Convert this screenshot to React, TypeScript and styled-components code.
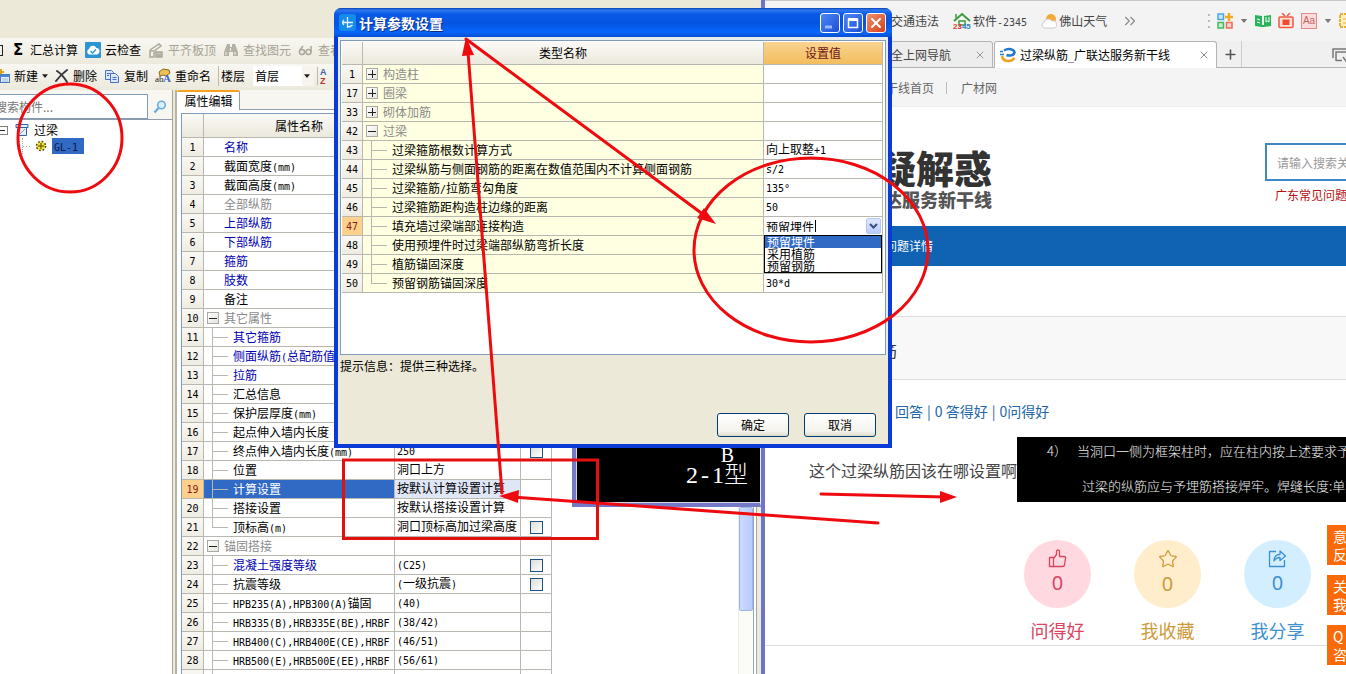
import React from 'react';
import styled, { createGlobalStyle, css } from 'styled-components';
import { Star, Plus, X, ChevronsRight } from 'lucide-react';

const cjk = '"Noto Sans CJK SC", sans-serif';
const line = '#b8b8b0';
const red = '#ee0a0e';

const GlobalStyle = createGlobalStyle`
  * { box-sizing: border-box; }
  html, body { margin: 0; height: 100%; overflow: hidden; }
  #root { height: 100%; }
  body { font: 12px/18px ${cjk}; color: #000; background: #fff; }
  button, input, select { font: inherit; color: inherit; margin: 0; padding: 0; border: 0; background: none; }
  a { color: inherit; text-decoration: none; }
  svg { display: block; flex: none; }
`;

const Ascii = styled.span`
  font-family: "DejaVu Sans Mono", monospace;
  font-size: 10px;
  line-height: 10px;
`;

/* Half-width characters take half of an ideograph's cell. */
const T = ({ children }: { children: string }) => (
  <>
    {children.split(/([\x21-\x7e°]+)/).map((part, i) => (i % 2 ? <Ascii key={i}>{part}</Ascii> : part))}
  </>
);

const Desktop = styled.div`
  position: relative;
  display: grid;
  grid-template-columns: 765px minmax(0, 1fr);
  height: 100%;
  overflow: hidden;
`;

/* ---------- modelling application ---------- */

const AppWindow = styled.section`
  display: flex;
  flex-direction: column;
  min-height: 0;
  overflow: hidden;
  background: #ece9d8;
  border-right: 4px solid #6f74c4;
`;
const MenuArea = styled.div`
  flex: 0 0 38px;
`;
const Toolbar = styled.div`
  display: flex;
  align-items: center;
  gap: 7px;
  flex: 0 0 26px;
  padding-bottom: 2px;
  background: linear-gradient(#f8f7f2, #ece9dc);
  overflow: hidden;
  white-space: nowrap;
`;
const ToolButton = styled.button`
  display: flex;
  align-items: center;
  gap: 4px;
  flex: none;
  line-height: 18px;
  &:disabled { color: #a5a295; }
`;
const CutGlyph = styled.span`
  width: 3px;
  height: 11px;
  border: 1px solid #222;
  border-left: 0;
`;
const Sigma = styled.span`
  width: 16px;
  text-align: center;
  font: bold 15px/18px "DejaVu Sans", sans-serif;
`;
const Field = styled.label`
  display: flex;
  align-items: center;
  gap: 8px;
  flex: none;
  padding-left: 2px;
  border-left: 1px solid #bdb9a8;
`;
const FloorSelect = styled.select`
  appearance: none;
  width: 61px;
  height: 20px;
  padding-left: 2px;
  background: #fff linear-gradient(#f6f4ec, #f6f4ec) right / 12px 100% no-repeat;
`;
const FloorBox = styled.span`
  display: flex;
  align-items: center;
  svg { margin-left: -10px; pointer-events: none; }
`;
const Workspace = styled.div`
  display: flex;
  flex: 1;
  min-height: 0;
`;
const TreePanel = styled.div`
  flex: 0 0 173px;
  background: #fff;
  border-right: 1px solid #a9a695;
  overflow: hidden;
`;
const SearchRow = styled.div`
  display: flex;
  align-items: flex-end;
  height: 30px;
  background: #f7f6f1;
  border-bottom: 1px solid #8e9cab;
`;
const SearchInput = styled.input`
  width: 148px;
  height: 25px;
  text-indent: -5px;
  background: #fff;
  border: 1px solid #7f9db9;
  border-left: 0;
  &::placeholder { color: #777; opacity: 1; }
`;
const SearchButton = styled.button`
  display: grid;
  place-items: center;
  width: 24px;
  height: 25px;
`;
const Tree = styled.ul`
  list-style: none;
  margin: 0;
  padding: 2px 0 0;
`;
const TreeItem = styled.li<{ $child?: boolean }>`
  display: flex;
  align-items: center;
  gap: ${p => (p.$child ? 5 : 6)}px;
  height: 16px;
  padding-left: ${p => (p.$child ? 22 : 0)}px;
  line-height: 16px;
`;
const BeamLabel = styled.span`
  display: flex;
  align-items: center;
  gap: 5px;
  padding-left: 1px;
`;
const Selected = styled.span`
  padding: 0 6px 0 2px;
  background: #316ac5;
  color: #0a1a44;
`;
const Collapse = styled.button`
  width: 8px;
  height: 9px;
  border: 1px solid #808080;
  border-left: 0;
  background: linear-gradient(#222, #222) 0 3px / 5px 1px no-repeat #fff;
`;
const Dots = styled.span`
  width: 8px;
  height: 16px;
  border-left: 1px dotted #aaa;
  background: repeating-linear-gradient(90deg, #aaa 0 1px, #fff 1px 3px) 0 8px / 8px 1px no-repeat;
`;
const Properties = styled.div`
  display: flex;
  flex-direction: column;
  flex: 1;
  min-width: 0;
  margin-left: 2px;
  border-left: 2px solid #b7b4a6;
  background: #fff;
`;
const TabStrip = styled.div`
  display: flex;
  flex: 0 0 20px;
  background: linear-gradient(#8e9cab, #8e9cab) bottom / 100% 1px no-repeat #f7f6f1;
`;
const PanelTab = styled.button`
  width: 63px;
  height: 20px;
  padding-left: 1px;
  background: #fff;
  border: 1px solid #8e9cab;
  border-width: 0 1px 0 0;
  border-top: 2px solid #f5a21d;
  border-radius: 2px 2px 0 0;
  line-height: 16px;
`;
const PropertiesBody = styled.div`
  display: flex;
  flex: 1;
  min-height: 0;
`;
const PropertyArea = styled.div`
  flex: 0 0 371px;
  margin: 3px 0 0 4px;
  border: 1px solid #7f9db9;
  border-width: 1px 0 0 1px;
  overflow: hidden;
`;

/* ---------- grids ---------- */

const Grid = styled.table`
  table-layout: fixed;
  width: 100%;
  border-collapse: separate;
  border-spacing: 0;
  white-space: nowrap;
`;
const cell = css`
  height: 19px;
  padding: 0;
  overflow: hidden;
  border: 1px solid ${line};
  border-width: 0 1px 1px 0;
  line-height: 18px;
  font-weight: normal;
`;
const HeadCell = styled.th<{ $hot?: boolean }>`
  ${cell}
  height: 24px;
  background: ${p => (p.$hot ? 'linear-gradient(#f9d391, #f3bd5c)' : 'linear-gradient(#fbfaf7, #ebe8dc)')};
  color: ${p => (p.$hot ? '#6b1414' : '#000')};
`;
const DialogHead = styled(HeadCell)`
  height: 23px;
`;
const NumberCell = styled.th<{ $hot?: boolean }>`
  ${cell}
  line-height: 16px;
  text-align: center;
  vertical-align: top;
  background: ${p => (p.$hot ? '#fdd08b' : 'linear-gradient(#f9f8f4, #efece2)')};
  color: ${p => (p.$hot ? '#8a1c1c' : '#000')};
`;
const NameCell = styled.td<{ $tone?: string; $bg?: string }>`
  ${cell}
  color: ${p => p.$tone || '#000'};
  background: ${p => p.$bg || '#fff'};
`;
const ValueCell = styled.td<{ $bg?: string }>`
  ${cell}
  padding-left: 2px;
  line-height: 16px;
  vertical-align: top;
  background: ${p => p.$bg || '#fff'};
`;
const CheckCell = styled.td`
  ${cell}
`;
const Check = styled.input`
  appearance: none;
  display: block;
  width: 13px;
  height: 13px;
  margin: 1px 0 0 9px;
  border: 1px solid #1c5180;
  background: linear-gradient(135deg, #dcdcd7, #fff);
`;
const Branch = styled.div`
  display: flex;
  align-items: center;
  height: 18px;
`;
const Toggle = styled.button`
  flex: none;
  width: 12px;
  height: 12px;
  margin: 0 5px 0 3px;
  border: 1px solid #aaaaa4;
  color: #222;
  display: grid;
  place-items: center;
  background: linear-gradient(135deg, #fff, #e6e4dc);
`;
const Guide = styled.span<{ $last?: boolean }>`
  flex: none;
  width: 16px;
  height: 18px;
  margin: 0 5px 0 8px;
  background:
    linear-gradient(${line}, ${line}) 0 9px / 16px 1px no-repeat,
    linear-gradient(${line}, ${line}) 0 0 / 1px ${p => (p.$last ? 10 : 18)}px no-repeat;
`;
const Plain = styled.span`
  padding-left: 20px;
`;

type Kind = 'plain' | 'open' | 'closed' | 'child' | 'last';

const Label = ({ kind, text }: { kind: Kind; text: string }) => (
  <Branch>
    {(kind === 'open' || kind === 'closed') && (
      <Toggle aria-label={text} aria-expanded={kind === 'open'}>
        <svg width="8" height="8" stroke="currentColor" shapeRendering="crispEdges">
          <path d={kind === 'open' ? 'M0 4.5h8' : 'M0 4.5h8M4.5 0v8'} />
        </svg>
      </Toggle>
    )}
    {(kind === 'child' || kind === 'last') && <Guide $last={kind === 'last'} />}
    {kind === 'plain' ? <Plain><T>{text}</T></Plain> : <span><T>{text}</T></span>}
  </Branch>
);

interface Property { kind: Kind; name: string; tone?: string; value?: string; check?: boolean }
const blue = '#0000b4';
const gray = '#8a8a8a';
const properties: Property[] = [
  { kind: 'plain', name: '名称', tone: blue },
  { kind: 'plain', name: '截面宽度(mm)' },
  { kind: 'plain', name: '截面高度(mm)' },
  { kind: 'plain', name: '全部纵筋', tone: gray },
  { kind: 'plain', name: '上部纵筋', tone: blue },
  { kind: 'plain', name: '下部纵筋', tone: blue },
  { kind: 'plain', name: '箍筋', tone: blue },
  { kind: 'plain', name: '肢数', tone: blue },
  { kind: 'plain', name: '备注' },
  { kind: 'open', name: '其它属性', tone: gray },
  { kind: 'child', name: '其它箍筋', tone: blue },
  { kind: 'child', name: '侧面纵筋(总配筋值', tone: blue },
  { kind: 'child', name: '拉筋', tone: blue },
  { kind: 'child', name: '汇总信息' },
  { kind: 'child', name: '保护层厚度(mm)' },
  { kind: 'child', name: '起点伸入墙内长度' },
  { kind: 'child', name: '终点伸入墙内长度(mm)', value: '250', check: true },
  { kind: 'child', name: '位置', value: '洞口上方' },
  { kind: 'child', name: '计算设置', value: '按默认计算设置计算' },
  { kind: 'child', name: '搭接设置', value: '按默认搭接设置计算' },
  { kind: 'last', name: '顶标高(m)', value: '洞口顶标高加过梁高度', check: true },
  { kind: 'open', name: '锚固搭接', tone: gray },
  { kind: 'child', name: '混凝土强度等级', tone: blue, value: '(C25)', check: true },
  { kind: 'child', name: '抗震等级', value: '(一级抗震)', check: true },
  { kind: 'child', name: 'HPB235(A),HPB300(A)锚固', value: '(40)' },
  { kind: 'child', name: 'HRB335(B),HRB335E(BE),HRBF', value: '(38/42)' },
  { kind: 'child', name: 'HRB400(C),HRB400E(CE),HRBF', value: '(46/51)' },
  { kind: 'child', name: 'HRB500(E),HRB500E(EE),HRBF', value: '(56/61)' },
  { kind: 'child', name: '' },
];
const currentProperty = 19;

const CanvasColumn = styled.div`
  display: flex;
  flex-direction: column;
  flex: 1;
  min-width: 0;
`;
const CadView = styled.div`
  display: flex;
  flex-direction: column;
  justify-content: flex-end;
  align-items: flex-end;
  flex: 0 0 397px;
  margin-left: 20px;
  padding: 0 12px 16px 0;
  background: #000;
  color: #fff;
  border: 4px solid #7479c8;
  border-width: 0 0 4px 4px;
  box-shadow: inset 1px -1px 0 #d5d5dd;
  border-right: 1px solid #e8e8f0;
  font: 300 24px/24px "Liberation Serif", ${cjk};
`;
const CadMark = styled.span`
  padding-right: 14px;
  font-size: 20px;
  line-height: 16px;
`;
const CadType = styled.span`
  display: flex;
  gap: 3px;
`;
const ScrollTrack = styled.div`
  flex: 1;
  align-self: flex-end;
  width: 23px;
  padding: 0 8px 0 1px;
  background: linear-gradient(90deg, #eeede5 0 1px, #fbfbf8 1px 15px, #8fa6bb 15px 16px, #fff 16px 18px, #aaa89c 18px 19px, #eceadf 19px);
`;
const ScrollThumb = styled.div`
  height: 104px;
  border: 1px solid #9fb5e8;
  border-radius: 2px;
  background: linear-gradient(90deg, #cbd9ff, #b9ccfb);
`;

/* ---------- settings dialog ---------- */

const Dialog = styled.section`
  position: absolute;
  left: 334px;
  top: 8px;
  width: 558px;
  background: #ece9d8;
  border: 4px solid #0a3bd6;
  border-top: 0;
  border-radius: 8px 8px 0 0;
`;
const TitleBar = styled.header`
  display: flex;
  align-items: center;
  gap: 3px;
  height: 29px;
  margin: 0 -4px;
  padding: 0 6px 0 5px;
  border-radius: 7px 7px 0 0;
  background: linear-gradient(#0a3fb4 0, #2f78ee 2px, #0a5ae8 6px, #0553e0 15px, #0566fb 24px, #0a4fd0 29px);
  color: #fff;
`;
const Title = styled.h1`
  flex: 1;
  margin: 0;
  font: bold 14px/18px ${cjk};
  text-shadow: 1px 1px 0 #0a2a80;
`;
const Caption = styled.button<{ $close?: boolean }>`
  display: grid;
  place-items: center;
  width: 20px;
  height: 20px;
  border: 1px solid #fff;
  border-radius: 3px;
  background: ${p => (p.$close ? 'linear-gradient(135deg, #f0906c, #d5401c)' : 'linear-gradient(135deg, #4f86f4, #1a4fd8)')};
`;
const GridFrame = styled.div`
  padding: 3px 2px 0;
  background: #e6ecec;
`;
const DialogGrid = styled.div`
  height: 315px;
  padding: 1px 2px 0 1px;
  background: #fff;
  border: 1px solid #7f9db9;
`;
const Combo = styled.div`
  position: relative;
  display: flex;
  align-items: center;
  height: 18px;
`;
const ComboInput = styled.input`
  width: 50px;
  height: 12px;
  border-right: 1px solid #000;
  line-height: 12px;
`;
const ComboButton = styled.button`
  display: grid;
  place-items: center;
  width: 15px;
  height: 16px;
  margin: 0 1px 0 auto;
  border: 1px solid #b3c6f3;
  border-radius: 2px;
  background: linear-gradient(#dfe8ff, #b8cbfa);
`;
const Options = styled.ul`
  position: absolute;
  z-index: 2;
  top: 18px;
  left: -2px;
  right: 0;
  margin: 0;
  padding: 0;
  list-style: none;
  border: 1px solid #000;
  background: #fff;
`;
const Option = styled.li<{ $on?: boolean }>`
  height: 12px;
  padding-left: 2px;
  line-height: 12px;
  color: ${p => (p.$on ? '#fff' : '#000')};
  background: ${p => (p.$on ? '#316ac5' : '#fff')};
`;
const ComboCell = styled(ValueCell)`
  overflow: visible;
`;
const Hint = styled.p`
  margin: 2px 2px 0;
`;
const Actions = styled.div`
  display: flex;
  justify-content: flex-end;
  gap: 15px;
  padding: 38px 12px 7px;
`;
const Action = styled.button`
  width: 72px;
  height: 24px;
  border: 1px solid #003c74;
  border-radius: 3px;
  background: linear-gradient(#fff, #f3f2ec 80%, #dedacb);
`;

interface Param { no: number; kind: Kind; name: string; value?: string }
const params: Param[] = [
  { no: 1, kind: 'closed', name: '构造柱' },
  { no: 17, kind: 'closed', name: '圈梁' },
  { no: 33, kind: 'closed', name: '砌体加筋' },
  { no: 42, kind: 'open', name: '过梁' },
  { no: 43, kind: 'child', name: '过梁箍筋根数计算方式', value: '向上取整+1' },
  { no: 44, kind: 'child', name: '过梁纵筋与侧面钢筋的距离在数值范围内不计算侧面钢筋', value: 's/2' },
  { no: 45, kind: 'child', name: '过梁箍筋/拉筋弯勾角度', value: '135°' },
  { no: 46, kind: 'child', name: '过梁箍筋距构造柱边缘的距离', value: '50' },
  { no: 47, kind: 'child', name: '填充墙过梁端部连接构造' },
  { no: 48, kind: 'child', name: '使用预埋件时过梁端部纵筋弯折长度' },
  { no: 49, kind: 'child', name: '植筋锚固深度' },
  { no: 50, kind: 'last', name: '预留钢筋锚固深度', value: '30*d' },
];

/* ---------- browser ---------- */

const Browser = styled.section`
  display: flex;
  flex-direction: column;
  min-width: 0;
  overflow: hidden;
  white-space: nowrap;
  background: #fff;
`;
const Bookmarks = styled.nav`
  display: flex;
  align-items: center;
  flex: 0 0 41px;
  gap: 7px;
  padding-left: 126px;
  border-top: 1px solid #c9c9c9;
  background: #f3f3f3;
  color: #444;
`;
const Bookmark = styled.a`
  display: flex;
  align-items: center;
  gap: 2px;
  margin-right: 7px;
`;
const Tools = styled.div`
  display: flex;
  align-items: center;
  gap: 7px;
  margin-left: auto;
`;
const ToolIcon = styled.button<{ $w: number }>`
  width: ${p => p.$w}px;
  overflow: hidden;
`;
const LetterIcon = styled.button`
  width: 16px;
  height: 16px;
  border: 1px solid #e08a8a;
  background: #fbdcdc;
  color: #cf5f5f;
  font: 10px/14px "Liberation Sans", sans-serif;
`;
const Tabs = styled.div`
  display: flex;
  flex: 0 0 27px;
  padding-left: 126px;
  background: linear-gradient(#b4b4b4, #b4b4b4) bottom / 100% 1px no-repeat #f0f0f0;
`;
const Tab = styled.div<{ $active?: boolean }>`
  display: flex;
  align-items: center;
  justify-content: space-between;
  gap: 4px;
  width: ${p => (p.$active ? 223 : 102)}px;
  margin-right: ${p => (p.$active ? 5 : 1)}px;
  padding: 0 6px 0 ${p => (p.$active ? 5 : 0)}px;
  border: 1px solid #b4b4b4;
  border-width: 1px 1px ${p => (p.$active ? 0 : 1)}px ${p => (p.$active ? 1 : 0)}px;
  border-radius: 3px 3px 0 0;
  background: ${p => (p.$active ? '#fff' : '#ededed')};
  color: ${p => (p.$active ? '#000' : '#444')};
`;
const TabTitle = styled.span`
  flex: 1;
`;
const NewTab = styled.button`
  width: 20px;
  margin-bottom: 1px;
  padding-left: 1px;
  border-right: 1px solid #ccc;
`;
const TabList = styled.button`
  width: 14px;
  margin-left: auto;
  overflow: hidden;
`;
const SiteNav = styled.nav`
  display: flex;
  align-items: center;
  gap: 12px;
  flex: 0 0 39px;
  padding: 2px 0 0 121px;
  background: #f4f4f4;
  border-bottom: 1px solid #ececec;
  color: #666;
`;
const Divider = styled.span`
  width: 1px;
  height: 12px;
  margin-right: 2px;
  background: #bbb;
`;
const SiteHeader = styled.header`
  display: flex;
  justify-content: space-between;
  flex: 0 0 119px;
  padding: 36px 0 0 113px;
`;
const Brand = styled.div`
  padding-top: 4px;
  text-align: right;
  color: #333;
  font: 900 38px/40px ${cjk};
`;
const BrandSub = styled.div`
  color: #555;
  font-size: 18px;
  line-height: 24px;
`;
const SiteSearch = styled.div`
  width: 81px;
  color: #b80f0f;
`;
const Query = styled.input`
  width: 100%;
  height: 38px;
  padding-left: 10px;
  border: 2px solid #4089c8;
  border-right: 0;
  background: #fff;
  &::placeholder { color: #999; opacity: 1; }
`;
const HotLink = styled.a`
  display: block;
  padding: 5px 0 0 10px;
`;
const Crumbs = styled.div`
  flex: 0 0 40px;
  margin-bottom: 50px;
  padding-left: 120px;
  background: #0f63b2;
  color: #fff;
  line-height: 40px;
`;
const Question = styled.h2`
  flex: 0 0 64px;
  margin: 0;
  padding: 4px 0 0 68px;
  background: #f8f8f8;
  border: 1px solid #dedede;
  border-width: 1px 0;
  font: 16px/58px ${cjk};
  color: #333;
`;
const Stats = styled.div`
  display: flex;
  gap: 4px;
  padding: 21px 0 16px 130px;
  color: #2166a8;
  font-size: 14px;
  line-height: 20px;
`;
const Post = styled.div`
  display: flex;
  align-items: center;
  padding-left: 44px;
  font-size: 16px;
  color: #444;
`;
const Scan = styled.div`
  flex: 1;
  height: 65px;
  padding: 0 0 0 30px;
  overflow: hidden;
  background: #000;
  color: #f0f0f0;
  font: 300 13px/34px ${cjk};
`;
const ScanLine = styled.div<{ $indent?: boolean }>`
  display: flex;
  gap: 10px;
  height: 34px;
  line-height: ${p => (p.$indent ? 30 : 28)}px;
  padding-left: ${p => (p.$indent ? 35 : 0)}px;
`;
const Votes = styled.div`
  display: flex;
  gap: 43px;
  padding: 38px 0 0 259px;
  height: 144px;
  border-bottom: 1px solid #ddd;
`;
const Vote = styled.button<{ $fg: string }>`
  display: flex;
  flex-direction: column;
  align-items: center;
  flex: none;
  width: 67px;
  height: 104px;
  color: ${p => p.$fg};
  font-size: 18px;
  line-height: 24px;
`;
const Disc = styled.span<{ $bg: string }>`
  display: flex;
  flex-direction: column;
  align-items: center;
  gap: 3px;
  width: 67px;
  height: 68px;
  margin-bottom: 10px;
  padding-top: 9px;
  border-radius: 50%;
  background: ${p => p.$bg};
  font: 20px/24px "Noto Sans", sans-serif;
`;
const SideBar = styled.aside`
  position: absolute;
  right: 0;
  top: 525px;
  display: grid;
  gap: 10px;
`;
const SideButton = styled.button`
  width: 19px;
  height: 40px;
  padding-left: 6px;
  overflow: hidden;
  text-align: left;
  background: #fb6a09;
  color: #fff;
  font-size: 14px;
  line-height: 18px;
  span { display: block; }
`;
const Marks = styled.svg`
  position: absolute;
  left: 0;
  top: 0;
  pointer-events: none;
`;

/* ---------- small drawings ---------- */

const Caret = ({ color = '#222', w = 6 }: { color?: string; w?: number }) => (
  <svg width={w} height="4" viewBox="0 0 8 5"><path d="M0 0h8L4 5z" fill={color} /></svg>
);
const CloudIcon = () => (
  <svg width="16" height="16"><rect width="16" height="16" rx="1" fill="#2b95d3" /><path d="M4 12.5a3 3 0 0 1 0-5.500a4 4 0 0 1 7.500-1a3.300 3.300 0 0 1 .5 6.500z" fill="#fff" /><path d="M5.500 9l2 2 3.500-3.500" stroke="#2b95d3" fill="none" strokeWidth="1.300" /></svg>
);
const SlabIcon = () => (
  <svg width="16" height="16" fill="none" stroke="#aaa79b" strokeWidth="1.500"><path d="M2 8l9-6 2 2-7 5h-4v6h4v-4l3-1" /><path d="M8 10h6v5H8zM10 12v3M12 12v3" fill="#c6c3b8" /></svg>
);
const BinocularIcon = () => (
  <svg width="16" height="16" fill="#b3b0a5"><path d="M4 2h3v3h2V2h3l3 8v4h-5v-4H6v4H1v-4z" /><path d="M3 10v3M12 10v3M7.500 6v3" stroke="#f3f1e8" /></svg>
);
const GlassesIcon = () => (
  <svg width="16" height="16" fill="none" stroke="#aaa79b" strokeWidth="1.500"><circle cx="4" cy="10" r="2.500" /><circle cx="10.500" cy="10" r="2.500" /><path d="M2 8l3-4M13 10V4" /></svg>
);
const NewIcon = () => (
  <svg width="10" height="16"><path d="M-2 4h6M1 1v6" stroke="#e0a21b" strokeWidth="2" /><rect x="0.500" y="6.500" width="9" height="8" fill="#e6effc" stroke="#4a78b8" /><path d="M0 8h10" stroke="#4a86d8" strokeWidth="2" /><path d="M2 11h6M2 13h6" stroke="#9bb6dc" /></svg>
);
const DeleteIcon = () => (
  <svg width="14" height="16" fill="none" stroke="#3a3a40" strokeWidth="2" strokeLinecap="round"><path d="M2 3c3 2 7 6 10 11M12 2C8 5 4 9 1 13" /></svg>
);
const CopyIcon = () => (
  <svg width="16" height="16" fill="#dbe8fb" stroke="#4470bd"><path d="M1.500 2.500h6l2 2v7h-8z" /><path d="M6.500 5.500h5l3 3v6h-8z" /><path d="M8.500 9.500h4M8.500 11.500h4M3 5.500h3M3 7.500h2" /></svg>
);
const RenameIcon = () => (
  <svg width="16" height="16"><path d="M4 4l4-3 6 1 1 3-4 3-3-1-3 1z" fill="#edc255" stroke="#8a6a20" /><text x="0" y="14" fontFamily="Liberation Serif" fontSize="9" fill="#222">ab</text><text x="8" y="14" fontFamily="Liberation Serif" fontSize="11" fontWeight="bold" fill="#3a66c8">A</text></svg>
);
const SortIcon = () => (
  <svg width="10" height="18"><text x="0" y="8" fontFamily="Liberation Sans" fontSize="9" fontWeight="bold" fill="#3a5fb0">A</text><text x="0" y="17" fontFamily="Liberation Sans" fontSize="9" fontWeight="bold" fill="#b03a3a">Z</text></svg>
);
const LensIcon = () => (
  <svg width="14" height="14" fill="none"><circle cx="8.500" cy="5" r="3.800" fill="#dceffc" stroke="#6aaede" strokeWidth="1.600" /><path d="M5.500 8L1.500 12.500" stroke="#6aaede" strokeWidth="2.400" /></svg>
);
const BeamIcon = () => (
  <svg width="14" height="14"><path d="M1 1.500h12v3H1zM3.500 4.500h8v8h-8z" fill="#e4edfa" stroke="#2f62a8" /><path d="M5 11l5-5" stroke="#7ea3d8" /></svg>
);
const GearIcon = () => (
  <svg width="12" height="12"><circle cx="6" cy="6" r="4.300" fill="#f2e13a" stroke="#4a4300" strokeWidth="2" strokeDasharray="1.700 1.677" /><circle cx="6" cy="6" r="3.700" fill="#f2e13a" /><path d="M6 3v6M3 6h6" stroke="#4a4300" /></svg>
);
const DialogIcon = () => (
  <svg width="17" height="17"><rect width="17" height="17" rx="3" fill="#178be8" /><path d="M8.500 3v11M3 8.500h11M5 6a3 3 0 0 0 0 5M8.500 13c3 0 4-1 5-2" stroke="#e6f6ff" strokeWidth="1.300" fill="none" /></svg>
);
const HouseIcon = () => (
  <svg width="18" height="18" fill="none"><path d="M1 9l8-7 8 7" stroke="#3d9a3c" strokeWidth="2" /><path d="M3 2v4M6 9h6v4H6z" stroke="#3d9a3c" strokeWidth="1.500" /><text x="0" y="17" fontFamily="Liberation Sans" fontSize="8" fontWeight="bold" fill="#d8392b">23<tspan fill="#2f7fd0">45</tspan></text></svg>
);
const WeatherIcon = () => (
  <svg width="16" height="18"><circle cx="10" cy="7" r="5" fill="#f7a938" /><path d="M3 16a3.300 3.300 0 0 1 0-6a4.500 4.500 0 0 1 8-1a3.600 3.600 0 0 1 2 7z" fill="#fff" stroke="#ccc" /></svg>
);
const GlodonIcon = () => (
  <svg width="16" height="16" fill="none" strokeWidth="2.600"><path d="M4 3.500c5-3 10-1 10.500 2-.5 3-5 3.500-8 2.500" stroke="#2379c8" /><path d="M2 9c1 6 9 6.500 12.500 2" stroke="#f0a020" /><path d="M0 4.500h3M0 7.500h4" stroke="#2379c8" strokeWidth="1.400" /></svg>
);
const ThumbIcon = () => (
  <svg width="19" height="19" fill="none" stroke="currentColor" strokeWidth="1.300" strokeLinejoin="round"><path d="M1.500 8.500h4v9h-4zM5.500 9.500l3-4V2.500q0-1.500 1.500-1.500t1.500 2V7.500H16q2 0 1.500 2l-1 6.500q-.3 1.500-2 1.500h-9" /></svg>
);
const ShareIcon = () => (
  <svg width="19" height="19" fill="none" stroke="currentColor" strokeWidth="1.300" strokeLinejoin="round"><path d="M8 2.500H1.500v15h15V11" /><path d="M6 12c0-4 2-6.500 6-6.500V2l5.500 5-5.500 4.500V8.500c-3 0-4.500 1-6 3.500z" /></svg>
);

const PropertyTable = () => (
  <Grid>
    <colgroup>
      <col style={{ width: 22 }} /><col style={{ width: 191 }} /><col style={{ width: 126 }} /><col />
    </colgroup>
    <thead>
      <tr><HeadCell /><HeadCell>属性名称</HeadCell><HeadCell>属性值</HeadCell><HeadCell>附加</HeadCell></tr>
    </thead>
    <tbody>
      {properties.map((p, i) => {
        const on = i + 1 === currentProperty;
        return (
          <tr key={i}>
            <NumberCell scope="row" $hot={on}><T>{p.name && String(i + 1)}</T></NumberCell>
            <NameCell $tone={on ? '#fff' : p.tone} $bg={on ? '#316ac5' : undefined}>
              <Label kind={p.kind} text={p.name} />
            </NameCell>
            <ValueCell $bg={on ? '#dfe7f7' : undefined}><T>{p.value || ''}</T></ValueCell>
            <CheckCell>{p.check && <Check type="checkbox" aria-label={p.name} />}</CheckCell>
          </tr>
        );
      })}
    </tbody>
  </Grid>
);

const SettingsDialog = () => (
  <Dialog role="dialog" aria-labelledby="dialog-title">
    <TitleBar>
      <DialogIcon />
      <Title id="dialog-title">计算参数设置</Title>
      <Caption aria-label="最小化"><svg width="12" height="12"><path d="M1 10h7" stroke="#9db9f5" strokeWidth="3" /></svg></Caption>
      <Caption aria-label="最大化"><svg width="12" height="12" fill="none" stroke="#fff"><path d="M1.500 2v8.500h9V2" strokeWidth="1.500" /><path d="M1 2.500h10" strokeWidth="3" /></svg></Caption>
      <Caption $close aria-label="关闭"><X size={16} strokeWidth={3} /></Caption>
    </TitleBar>
    <GridFrame>
      <DialogGrid>
        <Grid>
          <colgroup><col style={{ width: 21 }} /><col /><col style={{ width: 119 }} /></colgroup>
          <thead><tr><DialogHead /><DialogHead>类型名称</DialogHead><DialogHead $hot>设置值</DialogHead></tr></thead>
          <tbody>
            {params.map(p => {
              const group = p.kind === 'open' || p.kind === 'closed';
              return (
                <tr key={p.no}>
                  <NumberCell scope="row" $hot={p.no === 47}><T>{String(p.no)}</T></NumberCell>
                  <NameCell $bg="#ffffe1" $tone={group ? gray : undefined}><Label kind={p.kind} text={p.name} /></NameCell>
                  {p.no === 47 ? (
                    <ComboCell>
                      <Combo>
                        <ComboInput role="combobox" aria-expanded aria-controls="joint-options" aria-label={p.name} defaultValue="预留埋件" />
                        <ComboButton aria-label="展开"><svg width="9" height="7" fill="none" stroke="#3a5078" strokeWidth="2"><path d="M1 1l3.500 3.500L8 1" /></svg></ComboButton>
                        <Options id="joint-options" role="listbox">
                          <Option role="option" aria-selected $on>预留埋件</Option>
                          <Option role="option">采用植筋</Option>
                          <Option role="option">预留钢筋</Option>
                        </Options>
                      </Combo>
                    </ComboCell>
                  ) : (
                    <ValueCell><T>{p.value || ''}</T></ValueCell>
                  )}
                </tr>
              );
            })}
          </tbody>
        </Grid>
      </DialogGrid>
    </GridFrame>
    <Hint>提示信息：提供三种选择。</Hint>
    <Actions><Action>确定</Action><Action>取消</Action></Actions>
  </Dialog>
);

const Annotations = () => (
  <Marks width="1346" height="674" fill="none" stroke={red} strokeWidth="3" strokeLinecap="round">
    <ellipse cx="70" cy="138" rx="52" ry="54" />
    <ellipse cx="811" cy="250" rx="117" ry="92" />
    <rect x="343.500" y="460" width="254" height="78.500" strokeLinecap="butt" stroke="#e31010" />
    <path d="M466 39L708 218M468 52L502 493M878 523L512 497M821 494L945 497" />
    <g fill={red} stroke="none">
      <path d="M466 37L474 55L462 56z" />
      <path d="M716 224L697 218L704 208z" />
      <path d="M499 496L519 490L518 503z" />
      <path d="M957 497L940 491L940 503z" />
    </g>
  </Marks>
);

export default function App() {
  return (
    <Desktop>
      <GlobalStyle />
      <AppWindow>
        <MenuArea />
        <Toolbar>
          <CutGlyph />
          <ToolButton><Sigma>Σ</Sigma>汇总计算</ToolButton>
          <ToolButton><CloudIcon />云检查</ToolButton>
          <ToolButton disabled><SlabIcon />平齐板顶</ToolButton>
          <ToolButton disabled><BinocularIcon />查找图元</ToolButton>
          <ToolButton disabled><GlassesIcon />查看</ToolButton>
        </Toolbar>
        <Toolbar>
          <ToolButton><NewIcon />新建<Caret /></ToolButton>
          <ToolButton><DeleteIcon />删除</ToolButton>
          <ToolButton><CopyIcon />复制</ToolButton>
          <ToolButton><RenameIcon />重命名</ToolButton>
          <Field>
            楼层
            <FloorBox>
              <FloorSelect defaultValue="首层"><option>首层</option></FloorSelect>
              <Caret />
            </FloorBox>
          </Field>
          <Field as="div"><ToolButton aria-label="排序"><SortIcon /></ToolButton></Field>
        </Toolbar>
        <Workspace>
          <TreePanel>
            <SearchRow>
              <SearchInput aria-label="搜索构件" placeholder="搜索构件..." />
              <SearchButton aria-label="搜索"><LensIcon /></SearchButton>
            </SearchRow>
            <Tree>
              <TreeItem><Collapse aria-label="收起" /><BeamLabel><BeamIcon />过梁</BeamLabel></TreeItem>
              <TreeItem $child><Dots /><GearIcon /><Selected><T>GL-1</T></Selected></TreeItem>
            </Tree>
          </TreePanel>
          <Properties>
            <TabStrip><PanelTab>属性编辑</PanelTab></TabStrip>
            <PropertiesBody>
              <PropertyArea><PropertyTable /></PropertyArea>
              <CanvasColumn>
                <CadView><CadMark>B</CadMark><CadType><span>2</span><span>-</span><span>1型</span></CadType></CadView>
                <ScrollTrack><ScrollThumb /></ScrollTrack>
              </CanvasColumn>
            </PropertiesBody>
          </Properties>
        </Workspace>
      </AppWindow>

      <Browser>
        <Bookmarks>
          <Bookmark href="#">交通违法</Bookmark>
          <Bookmark href="#"><HouseIcon /><span>软件<T>-2345</T></span></Bookmark>
          <Bookmark href="#"><WeatherIcon />佛山天气</Bookmark>
          <ChevronsRight size={18} color="#888" strokeWidth={1.5} />
          <Tools>
            <svg width="2" height="14" fill="#bbb"><path d="M0 0h2v2H0zM0 6h2v2H0zM0 12h2v2H0z" /></svg>
            <ToolIcon $w={16} aria-label="应用"><svg width="16" height="16" fill="none" strokeWidth="1.500"><rect x="1" y="1" width="5.500" height="5.500" stroke="#4aa8e8" fill="#c8e8ff" /><rect x="1" y="9.500" width="5.500" height="5.500" stroke="#45b860" fill="#c4f0cc" /><rect x="9.500" y="9.500" width="5.500" height="5.500" stroke="#ee6a5a" fill="#ffd6cf" /><path d="M12 0v8M8 4h8" stroke="#f0ab20" strokeWidth="2.500" /></svg></ToolIcon>
            <Caret color="#777" w={8} />
            <ToolIcon $w={16} aria-label="阅读"><svg width="16" height="16"><path d="M0 2l7 1v11l-7-1zM16 2l-7 1v11l7-1z" fill="#27b45a" /><path d="M7 12h2v2H7z" fill="#27b45a" /><path d="M2 6l3 1M2 9l3 1M11 4v5l1.500-1 1.500 1V4" stroke="#fff" fill="none" /></svg></ToolIcon>
            <ToolIcon $w={16} aria-label="视频"><svg width="16" height="16"><path d="M4 0l3 3M12 0L9 3" stroke="#ee5a42" strokeWidth="1.500" /><rect x="1" y="4" width="14" height="10.500" rx="1" fill="#ffe0da" stroke="#ee5a42" strokeWidth="1.500" /><rect x="4.500" y="6.500" width="7" height="5.500" fill="#ee4a30" /></svg></ToolIcon>
            <LetterIcon>Aa</LetterIcon>
            <Caret color="#777" w={8} />
            <ToolIcon $w={7} aria-label="截图"><svg width="16" height="16" fill="none"><rect x="1" y="1" width="13" height="13" stroke="#e8b030" strokeWidth="2" strokeDasharray="3 1" fill="#fff0c4" /><path d="M4 6h8M4 10h8" stroke="#e8b030" /></svg></ToolIcon>
          </Tools>
        </Bookmarks>
        <Tabs>
          <Tab><TabTitle>全上网导航</TabTitle><X size={12} color="#999" strokeWidth={2} /></Tab>
          <Tab $active>
            <GlodonIcon /><TabTitle>过梁纵筋<T>_</T>广联达服务新干线</TabTitle><X size={12} color="#888" strokeWidth={2} />
          </Tab>
          <NewTab aria-label="新标签页"><Plus size={15} color="#555" strokeWidth={2.5} /></NewTab>
          <TabList aria-label="标签列表"><svg width="20" height="16" fill="none" stroke="#777" strokeWidth="1.500"><path d="M1 11V2h13M4 14V5h12v5M4 13.500h6M11 10l3 4 3-4" /></svg></TabList>
        </Tabs>
        <SiteNav><a href="#">干线首页</a><Divider /><a href="#">广材网</a></SiteNav>
        <SiteHeader>
          <Brand>疑解惑<BrandSub>达服务新干线</BrandSub></Brand>
          <SiteSearch>
            <Query aria-label="搜索" placeholder="请输入搜索关键字" />
            <HotLink href="#">广东常见问题</HotLink>
          </SiteSearch>
        </SiteHeader>
        <Crumbs>问题详情</Crumbs>
        <Question>过梁纵筋</Question>
        <Stats><span>回答</span><span>|</span><span>0 答得好</span><span>|</span><span>0问得好</span></Stats>
        <Post>
          这个过梁纵筋因该在哪设置啊
          <Scan>
            <ScanLine><span>4）</span><span>当洞口一侧为框架柱时，应在柱内按上述要求予埋</span></ScanLine>
            <ScanLine $indent>过梁的纵筋应与予埋筋搭接焊牢。焊缝长度:单面</ScanLine>
          </Scan>
        </Post>
        <Votes>
          <Vote $fg="#d9455f"><Disc $bg="#ffd9df"><ThumbIcon />0</Disc>问得好</Vote>
          <Vote $fg="#cf9a3a"><Disc $bg="#ffedcb"><Star size={20} strokeWidth={1.5} />0</Disc>我收藏</Vote>
          <Vote $fg="#3d90cf"><Disc $bg="#d3efff"><ShareIcon />0</Disc>我分享</Vote>
        </Votes>
      </Browser>

      <SideBar>
        <SideButton><span>意</span><span>反</span></SideButton>
        <SideButton><span>关</span><span>我</span></SideButton>
        <SideButton><span>Q</span><span>咨</span></SideButton>
      </SideBar>
      <SettingsDialog />
      <Annotations />
    </Desktop>
  );
}
